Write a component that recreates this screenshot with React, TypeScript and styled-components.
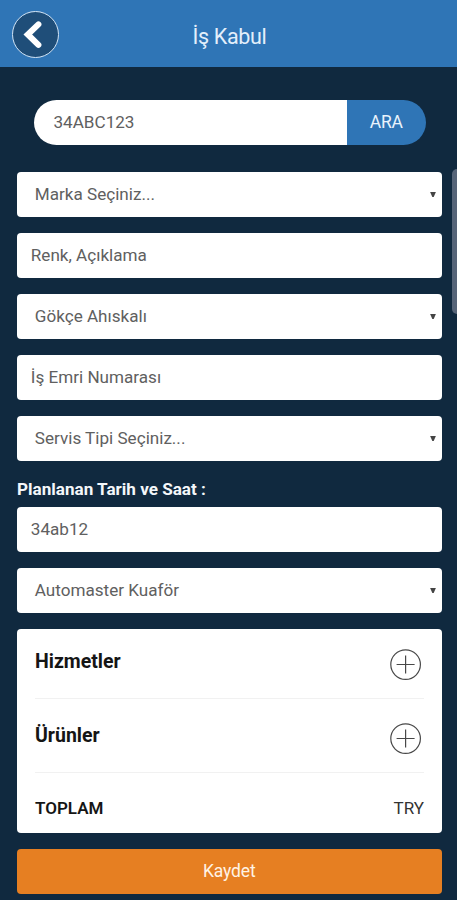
import React from 'react';
import styled, { createGlobalStyle } from 'styled-components';

const GlobalStyle = createGlobalStyle`
  * { box-sizing: border-box; }
  body {
    margin: 0;
    background: #10293f;
    font-family: Roboto, sans-serif;
    overflow: hidden;
  }
  button { font-family: inherit; border: 0; padding: 0; }
`;

const Screen = styled.div`
  position: relative;
  width: 457px;
  height: 900px;
  overflow: hidden;
  background: #10293f;
`;

const Header = styled.header`
  display: grid;
  grid-template-columns: 60px 1fr 60px;
  align-items: center;
  height: 67px;
  background: #2f75b6;
`;

const BackButton = styled.button`
  display: flex;
  align-items: center;
  justify-content: center;
  width: 47px;
  height: 47px;
  margin: 2px 0 0 11.5px;
  border: 1.5px solid #d3e5f6;
  border-radius: 50%;
  background: #1f4e79;
`;

const Title = styled.h1`
  margin: 6px 0 0 2px;
  text-align: center;
  font-size: 21.5px;
  letter-spacing: -0.35px;
  line-height: 26px;
  font-weight: 400;
  color: #e3effb;
`;

const SearchBar = styled.div`
  display: flex;
  width: 392px;
  height: 45px;
  margin: 33px 0 27px 33.5px;
  border-radius: 23px;
  overflow: hidden;
`;

const SearchValue = styled.div`
  flex: 1;
  padding-left: 20px;
  background: #fff;
  color: #606060;
  font-size: 17.1px;
  line-height: 45px;
`;

const SearchButton = styled.button`
  width: 78.5px;
  padding-bottom: 1px;
  background: #2f75b6;
  color: #e9f3fc;
  font-size: 17.5px;
  letter-spacing: -0.2px;
`;

const Form = styled.main`
  display: flex;
  flex-direction: column;
  gap: 16.1px;
  width: 425.5px;
  margin-left: 16.5px;
`;

const Field = styled.div<{ $select?: boolean }>`
  display: flex;
  align-items: center;
  justify-content: space-between;
  height: 45px;
  padding: 0 6px 1px ${(p) => (p.$select ? 18.3 : 14.3)}px;
  border-radius: 4px;
  background: #fff;
  color: #606060;
  font-size: 17.1px;
  line-height: 24px;
`;

const LabelledField = styled.div`
  display: flex;
  flex-direction: column;
`;

const Label = styled.div`
  height: 29.5px;
  padding: 1px 0 0 0.5px;
  color: #f4f7fa;
  font-size: 17.1px;
  line-height: 23px;
  font-weight: 700;
`;

const Card = styled.section`
  height: 203.5px;
  padding: 0 18px 0 18.5px;
  border-radius: 4px;
  background: #fff;
  color: #151515;
`;

const CardRow = styled.div<{ $height: number; $top: number }>`
  display: flex;
  justify-content: space-between;
  height: ${(p) => p.$height}px;
  padding-top: ${(p) => p.$top}px;
  border-bottom: 1px solid #f1f1f1;
`;

const RowTitle = styled.h2`
  margin: 0;
  padding-top: 1px;
  font-size: 19.5px;
  line-height: 24px;
  font-weight: 700;
`;

const AddButton = styled.button`
  display: flex;
  width: 32px;
  height: 32px;
  margin-right: 2.5px;
  background: none;
`;

const TotalRow = styled.div`
  display: flex;
  justify-content: space-between;
  padding-top: 23px;
  font-size: 17px;
  line-height: 24px;
`;

const TotalLabel = styled.span`
  font-weight: 600;
`;

const Currency = styled.span`
  color: #333;
`;

const SaveButton = styled.button`
  height: 45px;
  border-radius: 4px;
  background: #e67f22;
  color: #fff3e5;
  font-size: 17.5px;
  letter-spacing: -0.15px;
`;

const ScrollThumb = styled.div`
  position: absolute;
  right: -5px;
  top: 169px;
  width: 10px;
  height: 145px;
  border-radius: 5px;
  background: #566478;
`;

const Caret = () => (
  <svg width="6" height="5" viewBox="0 0 6 5">
    <path d="M.1 0h5.8L3.7 5H2.3z" fill="#444" />
  </svg>
);

const Plus = () => (
  <svg width="32" height="32" viewBox="0 0 32 32" fill="none" stroke="#484848" strokeWidth="1.2">
    <circle cx="15.6" cy="15.6" r="14.8" />
    <path d="M6.6 15.5h18M15.6 6.6v18" />
  </svg>
);

const Select = ({ value }: { value: string }) => (
  <Field $select>
    <span>{value}</span>
    <Caret />
  </Field>
);

const Section = ({ title, height, top }: { title: string; height: number; top: number }) => (
  <CardRow $height={height} $top={top}>
    <RowTitle>{title}</RowTitle>
    <AddButton aria-label={title}>
      <Plus />
    </AddButton>
  </CardRow>
);

export default function App() {
  return (
    <>
      <GlobalStyle />
      <Screen>
        <Header>
          <BackButton aria-label="Geri">
            <svg width="44" height="44" viewBox="0 0 44 44" fill="none">
              <path
                d="M25.4 11.4 14.8 21.5 25.4 31.8"
                stroke="#fff"
                strokeWidth="6"
                strokeLinejoin="miter"
                strokeLinecap="round"
              />
            </svg>
          </BackButton>
          <Title>İş Kabul</Title>
        </Header>
        <SearchBar>
          <SearchValue>34ABC123</SearchValue>
          <SearchButton>ARA</SearchButton>
        </SearchBar>
        <Form>
          <Select value="Marka Seçiniz..." />
          <Field>Renk, Açıklama</Field>
          <Select value="Gökçe Ahıskalı" />
          <Field>İş Emri Numarası</Field>
          <Select value="Servis Tipi Seçiniz..." />
          <LabelledField>
            <Label>Planlanan Tarih ve Saat :</Label>
            <Field>34ab12</Field>
          </LabelledField>
          <Select value="Automaster Kuaför" />
          <Card>
            <Section title="Hizmetler" height={70} top={20} />
            <Section title="Ürünler" height={74} top={24} />
            <TotalRow>
              <TotalLabel>TOPLAM</TotalLabel>
              <Currency>TRY</Currency>
            </TotalRow>
          </Card>
          <SaveButton>Kaydet</SaveButton>
        </Form>
        <ScrollThumb />
      </Screen>
    </>
  );
}
